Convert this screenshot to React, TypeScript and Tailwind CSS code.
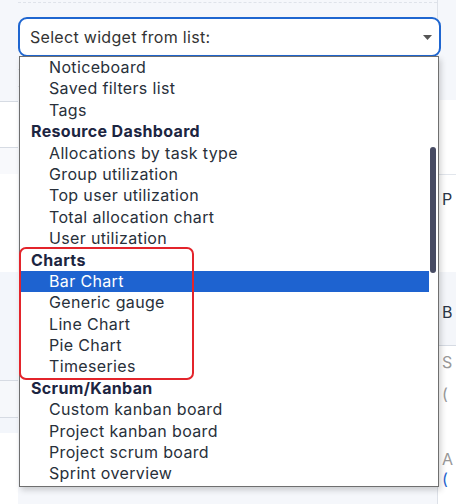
const groups: { title: string | null; items: string[] }[] = [
  { title: null, items: ['Noticeboard', 'Saved filters list', 'Tags'] },
  {
    title: 'Resource Dashboard',
    items: ['Allocations by task type', 'Group utilization', 'Top user utilization', 'Total allocation chart', 'User utilization'],
  },
  { title: 'Charts', items: ['Bar Chart', 'Generic gauge', 'Line Chart', 'Pie Chart', 'Timeseries'] },
  {
    title: 'Scrum/Kanban',
    items: ['Custom kanban board', 'Project kanban board', 'Project scrum board', 'Sprint overview'],
  },
];

const selected = 'Bar Chart';

function Background() {
  return (
    <div className="absolute inset-0 flex">
      {/* left strip */}
      <div className="w-[18px] flex flex-col">
        <div className="h-[102px] border-b border-[#d6dbe3]" />
        <div className="h-[46px] bg-white border-b border-[#d6dbe3]" />
        <div className="h-[26px] bg-[#f8f9fc]" />
        <div className="h-[98px] bg-white" />
        <div className="h-[109px] bg-[#f3f6fb] border-b border-[#d6dbe3]" />
        <div className="h-[37px] bg-[#f6f8fb] border-b border-[#d6dbe3]" />
        <div className="h-[15px] bg-[#f3f6fb]" />
        <div className="flex-1 bg-white" />
      </div>
      <div className="flex-1 flex flex-col">
        <div className="h-[3px] border-b border-dashed border-[#dfe3ea]" />
        <div className="h-[67px] border-b border-dashed border-[#dfe3ea]" />
        <div className="h-[17px] border-b border-dashed border-[#dfe3ea]" />
      </div>
      {/* right panel */}
      <div className="w-[19px] flex flex-col border-l border-[#dde1e8] text-[16px] text-[#2b3546]">
        <div className="h-[100px]" />
        <div className="h-[75px] bg-white border-b border-[#e2e6ec]" />
        <div className="h-[97px] bg-white pl-[4px] pt-[12px]">P</div>
        <div className="h-[74px] bg-[#f4f6fa] border-b border-[#d6dbe3] pl-[4px] pt-[28px]">B</div>
        <div className="flex-1 bg-white pl-[4px] pt-[6px] leading-[20px] text-[#999]">
          <div>S</div>
          <div className="h-[12px]" />
          <div>(</div>
          <div className="h-[45px]" />
          <div>A</div>
          <div className="text-[#1e63d0]">(</div>
        </div>
      </div>
    </div>
  );
}

export default function App() {
  return (
    <div
      className="relative w-[456px] h-[504px] overflow-hidden bg-[#f5f7fb]"
      style={{ fontFamily: 'Inter, "Liberation Sans", sans-serif' }}
    >
      <Background />

      <div className="absolute left-[18px] top-[17px] w-[423px]">
        <div className="h-[40px] bg-white border-2 border-[#1f66d0] rounded-[9px] flex items-center pl-[10px] pr-[7px] text-[16px] tracking-[0.3px] text-[#333]">
          <span className="flex-1">Select widget from list:</span>
          <svg width="9" height="5" viewBox="0 0 9 5">
            <path d="M0 0h9L4.5 5z" fill="#555" />
          </svg>
        </div>

        {/* open list */}
        <div className="relative ml-[1px] w-[420px] h-[431px] -mt-[1px] bg-white border border-[#6f6f6f] shadow-[2px_3px_6px_rgba(0,0,0,0.18)] overflow-hidden">
          <div className="pr-[9px] text-[16px] tracking-[0.35px]">
            {groups.map((g, gi) => (
              <div key={gi}>
                {g.title && (
                  <div className="h-[21.4px] leading-[21.4px] pl-[11px] font-bold text-[#1c2541]">
                    {g.title}
                  </div>
                )}
                {g.items.map((it) => (
                  <div
                    key={it}
                    className={
                      it === selected
                        ? 'h-[21.4px] leading-[21.4px] pl-[29px] bg-[#1e63d0] text-white'
                        : 'h-[21.4px] leading-[21.4px] pl-[29px] text-[#28303a]'
                    }
                  >
                    {it}
                  </div>
                ))}
              </div>
            ))}
          </div>
          {/* scrollbar thumb */}
          <div className="absolute right-[2px] top-[90px] w-[6px] h-[126px] rounded-full bg-[#474b63]" />
        </div>

        {/* highlight frame */}
        <div className="absolute left-[1px] top-[230px] w-[175px] h-[133px] border-2 border-[#e3242b] rounded-[7px]" />
      </div>
    </div>
  );
}
